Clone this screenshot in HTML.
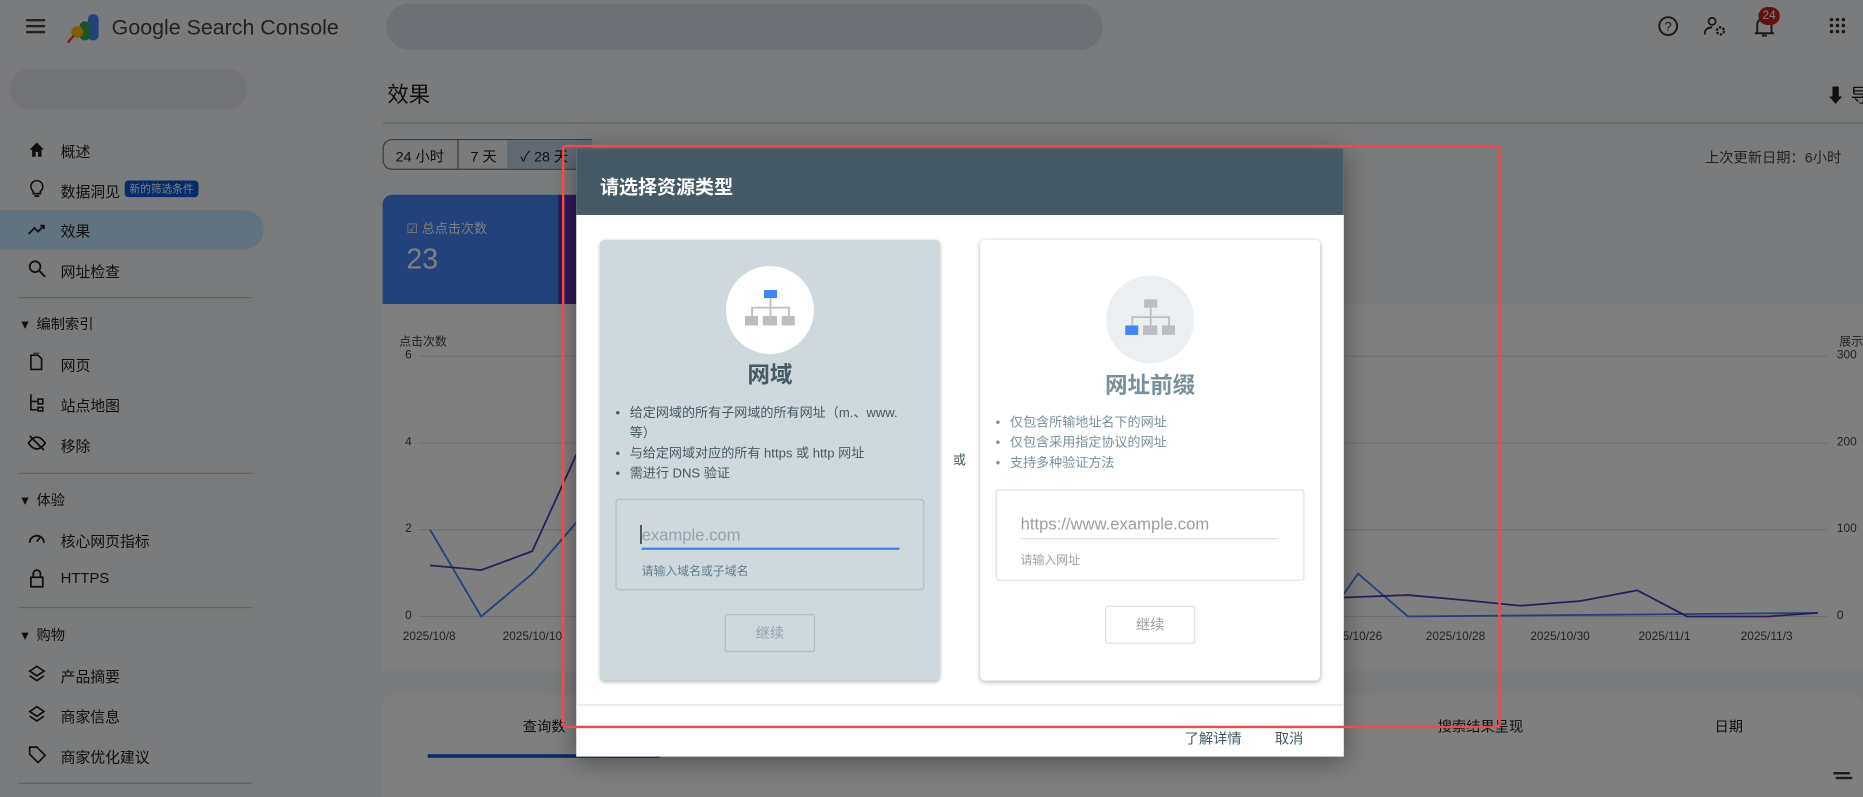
<!DOCTYPE html>
<html><head><meta charset="utf-8"><style>
*{margin:0;padding:0;box-sizing:border-box}
html,body{width:1863px;height:797px;overflow:hidden;background:#7b7c7e}
body{font-family:"Liberation Sans","Noto Sans CJK SC",sans-serif}
#s{position:absolute;left:0;top:0;width:1568px;height:671px;transform:scale(1.18814,1.18778);transform-origin:0 0;background:#f5f6f8;overflow:hidden}
.a{position:absolute;white-space:nowrap}
.nav{position:absolute;left:51px;font-size:12.5px;color:#1f1f1f}
.ic{position:absolute;left:23px;width:16px;height:16px}
.hr{position:absolute;height:1px;background:#c4c7c5}
.ov{position:absolute;left:0;top:0;width:1568px;height:671px;background:rgba(0,0,0,.5)}
.li{position:absolute;font-size:11px;color:#455a64}
.li:before{content:"•";position:absolute;left:-12px}
</style></head><body><div id="s">
<div class="a" style="left:0;top:0;width:1568px;height:48px;background:#f5f6f8"></div>
<div class="a" style="left:22px;top:16px;width:16px;height:2px;background:#444;box-shadow:0 5px 0 #444,0 10px 0 #444"></div>
<svg class="a" style="left:56px;top:10px" width="32" height="28" viewBox="0 0 32 28"><rect x="18" y="2" width="9" height="22" rx="4" fill="#4285f4"/><rect x="11" y="8" width="9" height="16" rx="4" fill="#34a853"/><circle cx="9" cy="17" r="5" fill="#fbbc04"/><line x1="6" y1="20" x2="1" y2="26" stroke="#ea4335" stroke-width="2"/></svg>
<div class="a" style="left:94px;top:13px;font-size:18px;color:#444">Google Search Console</div>
<div class="a" style="left:325px;top:3px;width:603px;height:39px;border-radius:20px;background:#dde3ea"></div>
<div class="a" style="left:8px;top:58px;width:200px;height:34px;border-radius:17px;background:#e7e9ec"></div>
<svg class="a" style="left:1395px;top:13px" width="18" height="18" viewBox="0 0 18 18"><circle cx="9" cy="9" r="7.5" fill="none" stroke="#333" stroke-width="1.6"/><text x="9" y="13" font-size="11" text-anchor="middle" fill="#333" font-family="Liberation Sans">?</text></svg>
<svg class="a" style="left:1434px;top:13px" width="20" height="18" viewBox="0 0 20 18"><circle cx="7" cy="5" r="3" fill="none" stroke="#333" stroke-width="1.5"/><path d="M1 16v-2c0-2 3-4 6-4" fill="none" stroke="#333" stroke-width="1.5"/><circle cx="14" cy="13" r="3" fill="none" stroke="#333" stroke-width="2" stroke-dasharray="2 1.2"/></svg>
<svg class="a" style="left:1476px;top:13px" width="18" height="20" viewBox="0 0 18 20"><path d="M3 15V8a6 6 0 0 1 12 0v7H3zM1 15h16M7 17h4" fill="none" stroke="#333" stroke-width="1.6"/></svg>
<div class="a" style="left:1480px;top:6px;width:18px;height:15px;border-radius:8px;background:#c5221f;color:#fff;font-size:10px;text-align:center;line-height:15px">24</div>
<div class="a" style="left:1540px;top:15px;width:3px;height:3px;background:#333;border-radius:2px;box-shadow:5px 0 #333,10px 0 #333,0 5px #333,5px 5px #333,10px 5px #333,0 10px #333,5px 10px #333,10px 10px #333"></div>
<div class="a" style="left:0;top:177px;width:222px;height:33px;border-radius:0 17px 17px 0;background:#c2e7ff"></div>
<svg class="ic" style="top:118px" viewBox="0 0 16 16"><path d="M2 8L8 2l6 6h-2v6H9v-4H7v4H4V8z" fill="#1f1f1f"/></svg>
<div class="nav" style="top:117px">概述</div>
<svg class="ic" style="top:151px" viewBox="0 0 16 16"><path d="M8 1a5 5 0 0 0-3 9v2h6v-2a5 5 0 0 0-3-9zM6 14h4" fill="none" stroke="#1f1f1f" stroke-width="1.4"/></svg>
<div class="nav" style="top:151px">数据洞见</div>
<div class="a" style="left:105px;top:152px;height:14px;padding:0 4px;background:#0b57d0;color:#fff;font-size:9px;line-height:14px;border-radius:3px">新的筛选条件</div>
<svg class="ic" style="top:185px" viewBox="0 0 16 16"><path d="M1 12l5-5 3 3 5-5M11 5h3v3" fill="none" stroke="#1f1f1f" stroke-width="1.5"/></svg>
<div class="nav" style="top:184px">效果</div>
<svg class="ic" style="top:218px" viewBox="0 0 16 16"><circle cx="6.5" cy="6.5" r="4.5" fill="none" stroke="#1f1f1f" stroke-width="1.5"/><path d="M10 10l5 5" stroke="#1f1f1f" stroke-width="1.6"/></svg>
<div class="nav" style="top:218px">网址检查</div>
<div class="hr" style="left:16px;top:250px;width:196px"></div>
<div class="nav" style="left:18px;top:264px;font-size:12px">▾ &nbsp;编制索引</div>
<div class="nav" style="top:297px">网页</div><svg class="ic" style="top:297px" viewBox="0 0 16 16"><path d="M3 2h6l3 3v9H3zM5 0h5" fill="none" stroke="#1f1f1f" stroke-width="1.4"/></svg>
<div class="nav" style="top:331px">站点地图</div><svg class="ic" style="top:331px" viewBox="0 0 16 16"><path d="M3 1v13h5M3 7h5M9 5h4v4H9zM9 12h4v3H9z" fill="none" stroke="#1f1f1f" stroke-width="1.4"/></svg>
<div class="nav" style="top:365px">移除</div><svg class="ic" style="top:365px" viewBox="0 0 16 16"><path d="M1 8s3-5 7-5 7 5 7 5-3 5-7 5-7-5-7-5zM2 2l12 12" fill="none" stroke="#1f1f1f" stroke-width="1.5"/></svg>
<div class="hr" style="left:16px;top:398px;width:196px"></div>
<div class="nav" style="left:18px;top:412px;font-size:12px">▾ &nbsp;体验</div>
<div class="nav" style="top:445px">核心网页指标</div><svg class="ic" style="top:445px" viewBox="0 0 16 16"><path d="M2 12a6 6 0 1 1 12 0M8 11l3-4" fill="none" stroke="#1f1f1f" stroke-width="1.5"/></svg>
<div class="nav" style="top:480px">HTTPS</div><svg class="ic" style="top:479px" viewBox="0 0 16 16"><rect x="3" y="7" width="10" height="8" fill="none" stroke="#1f1f1f" stroke-width="1.5"/><path d="M5 7V4a3 3 0 0 1 6 0v3" fill="none" stroke="#1f1f1f" stroke-width="1.5"/></svg>
<div class="hr" style="left:16px;top:511px;width:196px"></div>
<div class="nav" style="left:18px;top:526px;font-size:12px">▾ &nbsp;购物</div>
<div class="nav" style="top:559px">产品摘要</div><svg class="ic" style="top:559px" viewBox="0 0 16 16"><path d="M8 2l6 4-6 4-6-4zM2 10l6 4 6-4" fill="none" stroke="#1f1f1f" stroke-width="1.4"/></svg>
<div class="nav" style="top:593px">商家信息</div><svg class="ic" style="top:593px" viewBox="0 0 16 16"><path d="M8 2l6 4-6 4-6-4zM2 10l6 4 6-4" fill="none" stroke="#1f1f1f" stroke-width="1.4"/></svg>
<div class="nav" style="top:627px">商家优化建议</div><svg class="ic" style="top:627px" viewBox="0 0 16 16"><path d="M2 2h6l7 7-6 6-7-7z" fill="none" stroke="#1f1f1f" stroke-width="1.4"/></svg>
<div class="hr" style="left:16px;top:659px;width:196px"></div>
<div class="a" style="left:326px;top:66px;font-size:18px;color:#1f1f1f">效果</div>
<div class="a" style="left:1537px;top:67px;font-size:16px;color:#1f1f1f">⬇ 导</div>
<div class="hr" style="left:322px;top:103px;width:1246px"></div>
<div class="a" style="left:322px;top:117px;width:176px;height:26px;border:1px solid #747775;border-radius:8px 0 0 8px;background:#f5f6f8"></div>
<div class="a" style="left:385px;top:117px;width:1px;height:26px;background:#747775"></div>
<div class="a" style="left:427px;top:118px;width:71px;height:24px;background:#c2d3e6"></div>
<div class="a" style="left:333px;top:123px;font-size:12px;color:#1f1f1f">24 小时</div>
<div class="a" style="left:396px;top:123px;font-size:12px;color:#1f1f1f">7 天</div>
<div class="a" style="left:438px;top:123px;font-size:12px;color:#1f1f1f">✓ 28 天</div>
<div class="a" style="left:1435px;top:124px;font-size:12px;color:#444">上次更新日期：6小时</div>
<div class="a" style="left:322px;top:164px;width:150px;height:92px;background:#4285f4;border-radius:8px 0 0 0"></div>
<div class="a" style="left:470px;top:164px;width:20px;height:92px;background:#5e35b1"></div>
<div class="a" style="left:342px;top:184px;font-size:11px;color:#fff">☑ 总点击次数</div>
<div class="a" style="left:342px;top:205px;font-size:24px;color:#fff">23</div>
<div class="a" style="left:322px;top:256px;width:1246px;height:309px;background:#fff"></div>
<div class="a" style="left:336px;top:279px;font-size:10px;color:#444">点击次数</div>
<div class="a" style="left:1548px;top:279px;font-size:10px;color:#444">展示</div>
<div class="a" style="left:341px;top:294px;font-size:10px;color:#444">6</div>
<div class="a" style="left:341px;top:367px;font-size:10px;color:#444">4</div>
<div class="a" style="left:341px;top:440px;font-size:10px;color:#444">2</div>
<div class="a" style="left:341px;top:513px;font-size:10px;color:#444">0</div>
<div class="a" style="left:1546px;top:294px;font-size:10px;color:#444">300</div>
<div class="a" style="left:1546px;top:367px;font-size:10px;color:#444">200</div>
<div class="a" style="left:1546px;top:440px;font-size:10px;color:#444">100</div>
<div class="a" style="left:1546px;top:513px;font-size:10px;color:#444">0</div>
<svg class="a" style="left:0;top:0" width="1568" height="671"><g stroke="#e0e0e0"><line x1="352" y1="300" x2="1538" y2="300"/><line x1="352" y1="373" x2="1538" y2="373"/><line x1="352" y1="446" x2="1538" y2="446"/><line x1="352" y1="519" x2="1538" y2="519"/></g>
<polyline points="362,446 405,519 448,483 485,440" fill="none" stroke="#4285f4" stroke-width="1.5"/>
<polyline points="362,476 405,480 448,464 485,383" fill="none" stroke="#5e35b1" stroke-width="1.5"/>
<polyline points="1131,500 1143,483 1185,519 1530,516" fill="none" stroke="#4285f4" stroke-width="1.5"/>
<polyline points="1131,503 1185,501 1230,505 1280,510 1330,506 1378,497 1420,519 1488,519 1530,516" fill="none" stroke="#5e35b1" stroke-width="1.5"/></svg>
<div class="a" style="left:339px;top:531px;font-size:10px;color:#444">2025/10/8</div>
<div class="a" style="left:423px;top:531px;font-size:10px;color:#444">2025/10/10</div>
<div class="a" style="left:1130px;top:531px;font-size:10px;color:#444">5/10/26</div>
<div class="a" style="left:1200px;top:531px;font-size:10px;color:#444">2025/10/28</div>
<div class="a" style="left:1288px;top:531px;font-size:10px;color:#444">2025/10/30</div>
<div class="a" style="left:1379px;top:531px;font-size:10px;color:#444">2025/11/1</div>
<div class="a" style="left:1465px;top:531px;font-size:10px;color:#444">2025/11/3</div>
<div class="a" style="left:322px;top:585px;width:1246px;height:86px;background:#fff;border-radius:8px 8px 0 0"></div>
<div class="a" style="left:440px;top:603px;font-size:12px;color:#1f1f1f">查询数</div>
<div class="a" style="left:360px;top:635px;width:195px;height:3px;background:#0b57d0"></div>
<div class="a" style="left:1210px;top:603px;font-size:12px;color:#1f1f1f">搜索结果呈现</div>
<div class="a" style="left:1443px;top:603px;font-size:12px;color:#1f1f1f">日期</div>
<div class="a" style="left:1543px;top:650px;width:14px;height:2px;background:#333;box-shadow:2px 4px 0 -0px #333"></div>
<div class="ov"></div>
<div class="a" style="left:485px;top:125px;width:646px;height:512px;background:#fff;box-shadow:0 4px 20px rgba(0,0,0,.4)">
 <div class="a" style="left:0;top:0;width:646px;height:56px;background:#455a64"></div>
 <div class="a" style="left:20px;top:19px;font-size:16px;font-weight:bold;color:#fff">请选择资源类型</div>
 <div class="a" style="left:20px;top:77px;width:286px;height:371px;background:#cfd8dc;border-radius:4px;box-shadow:0 1px 3px rgba(0,0,0,.3)">
  <div class="a" style="left:106px;top:22px;width:74px;height:74px;border-radius:50%;background:#fff"></div>
  <svg class="a" style="left:122px;top:42px" width="42" height="32" viewBox="0 0 42 32"><rect x="16" y="0" width="11" height="7" fill="#4285f4"/><path d="M21.5 7v8M6 22v-7h31v7M21.5 15v7" fill="none" stroke="#bdbdbd" stroke-width="1.5"/><rect x="0" y="22" width="11" height="8" fill="#bdbdbd"/><rect x="15" y="22" width="12" height="8" fill="#bdbdbd"/><rect x="31" y="22" width="11" height="8" fill="#bdbdbd"/></svg>
  <div class="a" style="left:0;top:99px;width:286px;text-align:center;font-size:19px;font-weight:bold;color:#455a64">网域</div>
  <div class="li" style="left:25px;top:138px;white-space:normal;width:240px;line-height:17px">给定网域的所有子网域的所有网址（m.、www. 等）</div>
  <div class="li" style="left:25px;top:172px;line-height:17px">与给定网域对应的所有 https 或 http 网址</div>
  <div class="li" style="left:25px;top:189px;line-height:17px">需进行 DNS 验证</div>
  <div class="a" style="left:13px;top:218px;width:260px;height:77px;border:1px solid #b0bec5;border-radius:3px"></div>
  <div class="a" style="left:34px;top:240px;font-size:14px;color:#90a4ae;border-left:1px solid #000">example.com</div>
  <div class="a" style="left:35px;top:259px;width:217px;height:2px;background:#4285f4"></div>
  <div class="a" style="left:35px;top:270px;font-size:10px;color:#607d8b">请输入域名或子域名</div>
  <div class="a" style="left:105px;top:315px;width:76px;height:32px;border:1px solid #b0bec5;border-radius:2px;font-size:12px;color:#90a4ae;text-align:center;line-height:30px">继续</div>
 </div>
 <div class="a" style="left:317px;top:254px;font-size:11px;color:#455a64">或</div>
 <div class="a" style="left:340px;top:77px;width:286px;height:371px;background:#fff;border-radius:4px;box-shadow:0 1px 4px rgba(0,0,0,.3)">
  <div class="a" style="left:106px;top:30px;width:74px;height:74px;border-radius:50%;background:#eceff1"></div>
  <svg class="a" style="left:122px;top:50px" width="42" height="32" viewBox="0 0 42 32"><rect x="16" y="0" width="11" height="7" fill="#bdbdbd"/><path d="M21.5 7v8M6 22v-7h31v7M21.5 15v7" fill="none" stroke="#bdbdbd" stroke-width="1.5"/><rect x="0" y="22" width="11" height="8" fill="#4285f4"/><rect x="15" y="22" width="12" height="8" fill="#bdbdbd"/><rect x="31" y="22" width="11" height="8" fill="#bdbdbd"/></svg>
  <div class="a" style="left:0;top:108px;width:286px;text-align:center;font-size:19px;font-weight:bold;color:#78909c">网址前缀</div>
  <div class="li" style="left:25px;top:146px;color:#78909c;line-height:17px">仅包含所输地址名下的网址</div>
  <div class="li" style="left:25px;top:163px;color:#78909c;line-height:17px">仅包含采用指定协议的网址</div>
  <div class="li" style="left:25px;top:180px;color:#78909c;line-height:17px">支持多种验证方法</div>
  <div class="a" style="left:13px;top:210px;width:260px;height:77px;border:1px solid #e0e0e0;border-radius:3px"></div>
  <div class="a" style="left:34px;top:231px;font-size:14px;color:#9e9e9e">https://www.example.com</div>
  <div class="a" style="left:34px;top:251px;width:217px;height:1px;background:#e0e0e0"></div>
  <div class="a" style="left:34px;top:261px;font-size:10px;color:#9e9e9e">请输入网址</div>
  <div class="a" style="left:105px;top:308px;width:76px;height:32px;border:1px solid #e0e0e0;border-radius:2px;font-size:12px;color:#9e9e9e;text-align:center;line-height:30px">继续</div>
 </div>
 <div class="a" style="left:0;top:468px;width:646px;height:1px;background:#e0e0e0"></div>
 <div class="a" style="left:512px;top:488px;font-size:12px;color:#455a64">了解详情</div>
 <div class="a" style="left:588px;top:488px;font-size:12px;color:#455a64">取消</div>
</div>
<div class="a" style="left:473px;top:122px;width:790px;height:491px;border:2px solid #f04a4a;border-radius:3px"></div>
</div></body></html>
